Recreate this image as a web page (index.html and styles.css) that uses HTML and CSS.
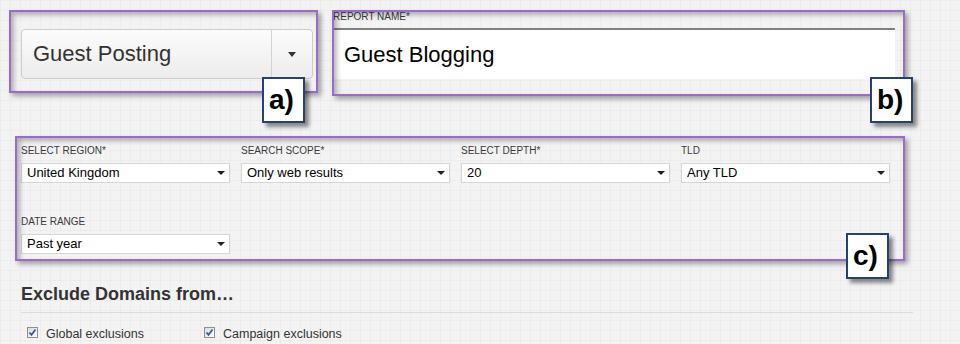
FILE: index.html
```
<!DOCTYPE html>
<html lang="en">

<head>
    <meta charset="UTF-8">
    <title>New Report</title>
    <link rel="stylesheet" href="styles.css">
</head>

<body>
    <div class="top-row">
        <div class="note note-a">
            <div class="dropdown">
                <span class="dropdown-text">Guest Posting</span>
                <span class="dropdown-toggle">
                    <svg width="8" height="5" viewBox="0 0 8 5"><path d="M0 0H8L4 5Z" fill="#333"/></svg>
                </span>
            </div>
            <div class="tag tag-a">a)</div>
        </div>
        <div class="note note-b">
            <div class="field-label">REPORT NAME*</div>
            <div class="name-input">Guest Blogging</div>
            <div class="tag tag-b">b)</div>
        </div>
    </div>

    <div class="note note-c">
        <div class="filters">
            <div class="field">
                <div class="field-label">SELECT REGION*</div>
                <div class="select"><span>United Kingdom</span><svg width="8" height="4" viewBox="0 0 8 4"><path d="M0 0H8L4 4Z" fill="#222"/></svg></div>
            </div>
            <div class="field">
                <div class="field-label">SEARCH SCOPE*</div>
                <div class="select"><span>Only web results</span><svg width="8" height="4" viewBox="0 0 8 4"><path d="M0 0H8L4 4Z" fill="#222"/></svg></div>
            </div>
            <div class="field">
                <div class="field-label">SELECT DEPTH*</div>
                <div class="select"><span>20</span><svg width="8" height="4" viewBox="0 0 8 4"><path d="M0 0H8L4 4Z" fill="#222"/></svg></div>
            </div>
            <div class="field">
                <div class="field-label">TLD</div>
                <div class="select"><span>Any TLD</span><svg width="8" height="4" viewBox="0 0 8 4"><path d="M0 0H8L4 4Z" fill="#222"/></svg></div>
            </div>
            <div class="field">
                <div class="field-label">DATE RANGE</div>
                <div class="select"><span>Past year</span><svg width="8" height="4" viewBox="0 0 8 4"><path d="M0 0H8L4 4Z" fill="#222"/></svg></div>
            </div>
        </div>
        <div class="tag tag-c">c)</div>
    </div>

    <h2 class="section-title">Exclude Domains from…</h2>
    <hr class="section-rule">
    <div class="checks">
        <div class="check">
            <span class="checkbox"><svg width="9" height="9" viewBox="0 0 9 9"><path d="M1.5 4.5L3.5 6.8L7.5 1.5" fill="none" stroke="#2f57a8" stroke-width="1.7"/></svg></span>
            <span>Global exclusions</span>
        </div>
        <div class="check">
            <span class="checkbox"><svg width="9" height="9" viewBox="0 0 9 9"><path d="M1.5 4.5L3.5 6.8L7.5 1.5" fill="none" stroke="#2f57a8" stroke-width="1.7"/></svg></span>
            <span>Campaign exclusions</span>
        </div>
    </div>
</body>

</html>
```

FILE: styles.css
```
body {
    font-family: "Liberation Sans", Arial, sans-serif;
    color: #333;
    margin: 0;
    padding: 10px 0 0 0;
    background-color: #f3f3f3;
    background-image:
        linear-gradient(rgba(0, 0, 0, 0.025) 1px, transparent 1px),
        linear-gradient(90deg, rgba(0, 0, 0, 0.025) 1px, transparent 1px);
    background-size: 10px 10px;
}

/* annotation frames */
.top-row {
    display: flex;
    align-items: flex-start;
    padding-left: 9px;
}

.note {
    position: relative;
    box-sizing: border-box;
}

.note::after {
    content: "";
    position: absolute;
    inset: 0;
    border: 2px solid #9b6bcc;
    box-shadow: 3px 3px 5px rgba(0, 0, 0, 0.35), inset 3px 3px 5px rgba(0, 0, 0, 0.28);
    pointer-events: none;
    z-index: 1;
}

.note-a {
    width: 309px;
    height: 83px;
    padding: 19px 0 0 12px;
}

.note-b {
    width: 573px;
    height: 86px;
    margin-left: 14px;
    padding: 0 0 0 1px;
}

.note-c {
    width: 890px;
    height: 125px;
    margin: 40px 0 0 15px;
    padding: 8px 0 0 6px;
}

.tag {
    position: absolute;
    box-sizing: border-box;
    width: 43px;
    height: 46px;
    padding-left: 5px;
    border: 2px solid #24426f;
    background: #fff;
    color: #000;
    font-size: 28px;
    font-weight: bold;
    line-height: 42px;
    box-shadow: 4px 4px 4px rgba(0, 0, 0, 0.45);
    z-index: 2;
}

.tag-a {
    right: 13px;
    bottom: -30px;
}

.tag-b {
    right: -8px;
    bottom: -27px;
}

.tag-c {
    right: 16px;
    bottom: -18px;
}

/* a) template dropdown */
.dropdown {
    display: flex;
    width: 292px;
    height: 50px;
    box-sizing: border-box;
    border: 1px solid #ccc;
    border-radius: 4px;
    background: linear-gradient(#fcfcfc, #ececec);
}

.dropdown-text {
    flex: 1;
    padding-left: 11px;
    font-size: 22px;
    line-height: 48px;
    color: #333;
}

.dropdown-toggle {
    display: flex;
    align-items: center;
    justify-content: center;
    width: 40px;
    border-left: 1px solid #d2d2d2;
}

/* b) report name */
.field-label {
    font-size: 10px;
    line-height: 13px;
    color: #3a3a3a;
}

.name-input {
    width: 551px;
    height: 49px;
    margin-top: 5px;
    padding-left: 11px;
    box-sizing: content-box;
    border-top: 2px solid #808080;
    background: #fff;
    color: #000;
    font-size: 22px;
    line-height: 49px;
}

/* c) search filters */
.filters {
    display: grid;
    grid-template-columns: repeat(4, 209px);
    column-gap: 11px;
    row-gap: 32px;
}

.select {
    display: flex;
    align-items: center;
    justify-content: space-between;
    height: 20px;
    margin-top: 6px;
    padding: 0 4px 0 5px;
    box-sizing: border-box;
    border: 1px solid #d6d6d6;
    background: #fff;
    color: #000;
    font-size: 13px;
    line-height: 18px;
}

/* exclusions */
.section-title {
    margin: 22px 0 0 21px;
    font-size: 18px;
    line-height: 22px;
    color: #333;
}

.section-rule {
    width: 892px;
    margin: 7px 0 0 21px;
    border: none;
    border-top: 1px solid #dcdcdc;
}

.checks {
    display: flex;
    margin-top: 13px;
    padding-left: 27px;
}

.check {
    display: flex;
    align-items: flex-start;
    width: 177px;
    font-size: 12.5px;
    line-height: 16px;
    color: #333;
}

.checkbox {
    display: flex;
    align-items: center;
    justify-content: center;
    width: 11px;
    height: 11px;
    box-sizing: border-box;
    margin: 1px 8px 0 0;
    border: 1px solid #8e8f8f;
    background: linear-gradient(135deg, #dcdcdc, #fdfdfd);
}
```
